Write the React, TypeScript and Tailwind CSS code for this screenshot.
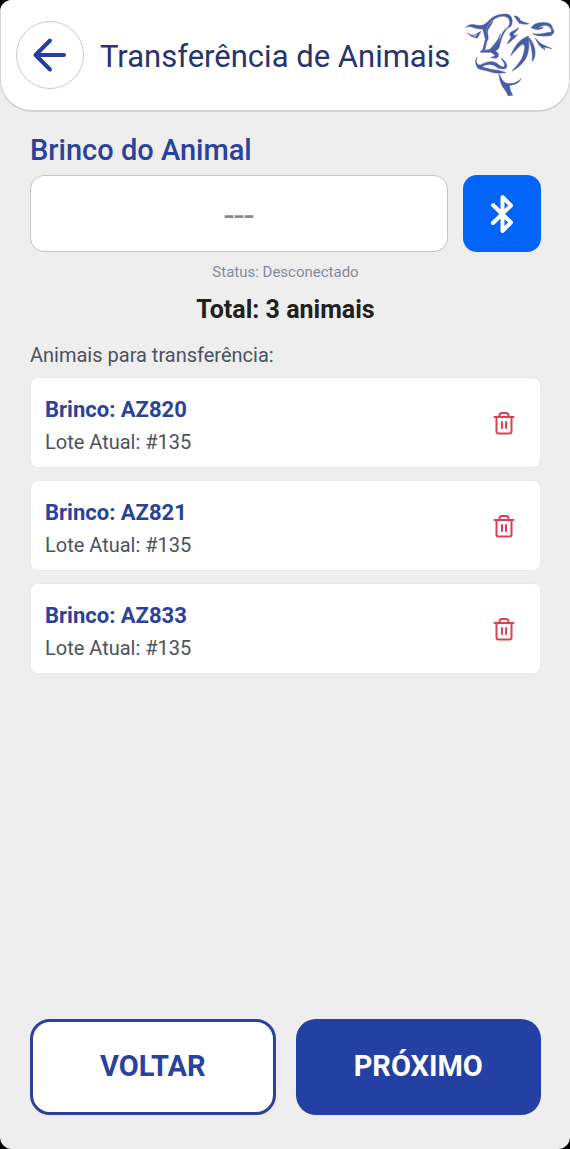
import React, { useState } from 'react';

interface Animal {
  brinco: string;
  lote: string;
}

const initialAnimals: Animal[] = [
  { brinco: 'AZ820', lote: '#135' },
  { brinco: 'AZ821', lote: '#135' },
  { brinco: 'AZ833', lote: '#135' },
];

const ArrowLeftIcon: React.FC = () => (
  <svg viewBox="0 0 36 36" className="w-9 h-9" fill="none" stroke="currentColor" strokeWidth="4" strokeLinecap="round" strokeLinejoin="round" aria-hidden="true">
    <path d="M32 18H4M18 3.5L3.5 18L18 32.5" />
  </svg>
);

const BluetoothIcon: React.FC = () => (
  <svg viewBox="0 0 26 42" className="w-[26px] h-[42px]" fill="none" stroke="currentColor" strokeWidth="4" strokeLinecap="round" strokeLinejoin="round" aria-hidden="true">
    <path d="M4 12L22 29.500L13.500 38V4L22 12.500L4 30" />
  </svg>
);

const TrashIcon: React.FC = () => (
  <svg viewBox="0 0 24 24" className="w-6 h-6" fill="none" stroke="currentColor" strokeWidth="2" strokeLinecap="round" strokeLinejoin="round" aria-hidden="true">
    <path d="M2.500 6H21.500" />
    <path d="M4.500 6V20.500Q4.500 22.500 6.500 22.500H17.500Q19.500 22.500 19.500 20.500V6" />
    <path d="M7.500 6V4.500Q7.500 2 10 2H14Q16.500 2 16.500 4.500V6" />
    <path d="M10 11V17M14 11V17" />
  </svg>
);

const CowLogo: React.FC = () => (
  <svg viewBox="45 33 270 258" className="w-[90px] h-[86px] shrink-0 text-[#4a5ca8]" fill="currentColor" stroke="currentColor" strokeWidth="1.5" strokeLinejoin="round" role="img" aria-label="Logo">
    {/* left ear */}
    <path d="M48 81C50 73 61 69 74 71C84 74 92 74 101 72L106 68C104 77 101 83 96 84C84 85 73 79 62 77C55 76 50 78 48 81Z" />
    <path d="M52 95C60 102 68 103 76 101C83 98 87 93 93 91C88 98 88 104 83 110C78 112 70 109 62 105L75 107C79 106 82 101 82 98C72 106 59 106 52 95Z" />
    {/* forehead and face */}
    <path d="M99 74C112 66 118 55 130 48C142 41 160 37 174 40C184 44 188 54 186 66C185 76 180 80 170 82C177 76 180 70 179 61C177 49 166 45 155 46C143 47 132 54 125 61C118 68 112 72 109 84C107 94 112 106 111 118L105 146L97 153H91L99 144L106 115L101 94L97 82Z" />
    <path d="M111 80C113 72 122 68 129 60C125 74 114 80 113 91C112 101 117 109 113 119L108 106Z" />
    <path d="M172 82C161 86 157 96 153 107C149 119 142 130 136 139C127 147 111 143 92 154H121C132 150 143 149 147 140C152 124 155 102 172 82Z" />
    <path d="M151 98C147 114 138 123 131 132L120 145L132 143L145 130Z" />
    {/* muzzle */}
    <path d="M120 150C130 146 139 149 144 157C148 165 144 171 135 172L122 169C130 167 136 166 134 162C130 157 124 157 120 150Z" />
    <path d="M81 168C76 180 80 193 91 192C109 182 127 178 141 187C149 195 157 200 162 197C167 192 161 182 153 172C167 179 174 193 169 201C161 207 145 203 135 195C123 187 104 190 96 198L119 204C134 207 151 208 168 215C151 217 132 218 116 211L88 204C76 199 74 178 81 168Z" />
    {/* poll and brow */}
    <path d="M192 45C202 44 208 49 211 58C218 64 229 65 237 68C228 71 215 69 207 66L198 53Z" />
    <path d="M182 94C190 90 199 85 206 80C203 88 196 94 190 98L193 104L202 101C194 112 182 121 172 129C174 121 180 114 184 107C178 104 178 98 182 94Z" />
    {/* right ear */}
    <path d="M244 81C249 69 261 65 275 65C291 64 302 67 305 74L312 92C309 102 302 105 290 105C275 106 260 105 248 98C262 100 275 100 286 96L304 93C306 86 301 77 292 74C283 71 273 75 265 80C258 84 250 84 244 81Z" />
    <path d="M252 82C263 84 270 78 280 79C277 84 266 87 256 85Z" />
    <path d="M256 112C263 119 270 128 281 132L305 143L282 138L285 146C272 141 263 128 256 112Z" />
    {/* cheek and neck */}
    <path d="M182 164C188 149 197 131 211 119C222 110 229 109 234 105C238 121 238 141 233 158C226 181 209 198 186 210C202 193 217 176 221 156C226 139 225 128 217 130C204 137 195 153 182 164Z" />
    <path d="M234 107C250 122 257 144 255 160C254 172 250 178 246 181C248 165 248 144 234 107Z" />
    <path d="M209 130L196 142C202 130 210 125 219 119Z" />
    <path d="M146 218C155 230 157 244 172 247C191 250 204 242 213 233C208 246 194 252 178 253L181 268L188 283L174 284C169 268 158 262 153 247C149 235 148 228 146 218Z" />
  </svg>
);

interface AnimalCardProps {
  animal: Animal;
  onRemove: (brinco: string) => void;
}

const AnimalCard: React.FC<AnimalCardProps> = ({ animal, onRemove }) => (
  <li className="flex items-center justify-between rounded-lg border border-[#e9e9e9] bg-white pl-[14px] pr-4">
    <div className="pt-4 pb-[9px]">
      <p className="text-[22px] leading-8 font-bold text-[#2a429c]">Brinco: {animal.brinco}</p>
      <p className="text-[20px] leading-8 text-[#4b5260]">Lote Atual: {animal.lote}</p>
    </div>
    <button
      type="button"
      onClick={() => onRemove(animal.brinco)}
      aria-label={`Remover ${animal.brinco}`}
      className="p-2 text-[#d9424e]"
    >
      <TrashIcon />
    </button>
  </li>
);

const App: React.FC = () => {
  const [animals, setAnimals] = useState<Animal[]>(initialAnimals);
  const [tag, setTag] = useState('');

  const handleRemove = (brinco: string) => {
    setAnimals(animals.filter((a) => a.brinco !== brinco));
  };

  return (
    <div className="min-h-screen flex bg-black font-['Roboto',sans-serif]">
      <div className="flex-1 flex flex-col overflow-hidden rounded-xl bg-[#eeeeee]">
        <header className="flex items-center rounded-b-[32px] border-x border-b-2 border-[#d2d2d2] bg-white pl-[15px] pr-[14px] py-3">
          <button
            type="button"
            aria-label="Voltar para a tela anterior"
            className="w-[68px] h-[68px] shrink-0 flex items-center justify-center rounded-full border border-[#cccccc] text-[#243f9e]"
          >
            <ArrowLeftIcon />
          </button>
          <h1 className="flex-1 pl-4 pt-1 text-[31px] leading-10 whitespace-nowrap text-[#27336f]">Transferência de Animais</h1>
          <CowLogo />
        </header>

        <main className="flex-1 flex flex-col pl-[30px] pr-[29px] pt-[18px]">
          <label htmlFor="brinco" className="text-[29px] leading-10 font-medium text-[#2a429c]">
            Brinco do Animal
          </label>
          <div className="mt-[5px] flex gap-[15px]">
            <input
              id="brinco"
              type="text"
              value={tag}
              onChange={(e) => setTag(e.target.value)}
              placeholder="---"
              className="flex-1 min-w-0 h-[77px] pt-1 rounded-[14px] border border-[#c4c4c4] bg-white text-center text-[36px] text-[#2a429c] placeholder:text-[#8a8a8a] focus:outline-none"
            />
            <button
              type="button"
              aria-label="Conectar Bluetooth"
              className="w-[78px] h-[77px] shrink-0 flex items-center justify-center rounded-[14px] bg-[#0264f8] text-white"
            >
              <BluetoothIcon />
            </button>
          </div>

          <p className="mt-2 text-center text-[15px] leading-6 text-[#868a96]">Status: Desconectado</p>
          <p className="mt-[10px] text-center text-[25px] leading-8 font-bold text-[#202020]">Total: {animals.length} animais</p>

          <h2 className="mt-[13px] text-[20px] leading-8 text-[#4b5260]">Animais para transferência:</h2>
          <ul className="mt-[6px] flex flex-col gap-3">
            {animals.map((animal) => (
              <AnimalCard key={animal.brinco} animal={animal} onRemove={handleRemove} />
            ))}
          </ul>
        </main>

        <footer className="grid grid-cols-2 gap-5 pl-[30px] pr-[29px] pt-6 pb-[34px]">
          <button type="button" className="h-24 rounded-[20px] border-3 border-[#2a429c] bg-white text-[29px] font-bold text-[#2a429c]">
            VOLTAR
          </button>
          <button type="button" className="h-24 rounded-[20px] bg-[#2440a2] text-[29px] font-bold text-white">
            PRÓXIMO
          </button>
        </footer>
      </div>
    </div>
  );
};

export default App;
